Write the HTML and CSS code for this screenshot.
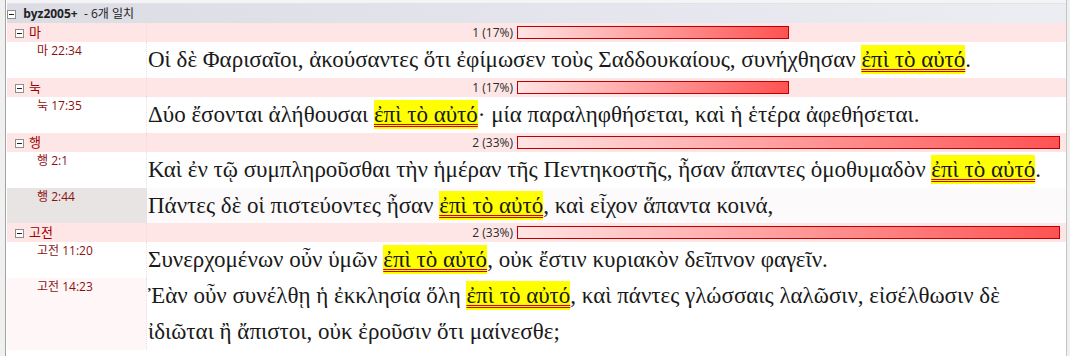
FILE: index.html
```html
<!DOCTYPE html>
<html lang="ko">
<head>
  <meta charset="UTF-8" />
  <title>byz2005+ 검색 결과</title>
  <link rel="stylesheet" href="styles.css">
</head>
<body>
  <div class="frame">
    <div class="topline"></div>
    <div class="results">
      <div class="source-row">
        <span class="tog"></span>
        <b>byz2005+</b>&nbsp; - 6개 일치
      </div>

      <div class="group-row">
        <div class="group-name"><span class="tog"></span>마</div>
        <div class="group-stat">
          <span class="count">1 (17%)</span>
          <div class="bar-track"><div class="bar" style="width: 50%"></div></div>
        </div>
      </div>
      <div class="verse-row">
        <div class="ref">마 22:34</div>
        <div class="text">Οἱ δὲ Φαρισαῖοι, ἀκούσαντες ὅτι ἐφίμωσεν τοὺς Σαδδουκαίους, συνήχθησαν <span class="hit">ἐπὶ τὸ αὐτό</span>.</div>
      </div>

      <div class="group-row">
        <div class="group-name"><span class="tog"></span>눅</div>
        <div class="group-stat">
          <span class="count">1 (17%)</span>
          <div class="bar-track"><div class="bar" style="width: 50%"></div></div>
        </div>
      </div>
      <div class="verse-row">
        <div class="ref">눅 17:35</div>
        <div class="text">Δύο ἔσονται ἀλήθουσαι <span class="hit">ἐπὶ τὸ αὐτό</span>· μία παραληφθήσεται, καὶ ἡ ἑτέρα ἀφεθήσεται.</div>
      </div>

      <div class="group-row">
        <div class="group-name"><span class="tog"></span>행</div>
        <div class="group-stat">
          <span class="count">2 (33%)</span>
          <div class="bar-track"><div class="bar" style="width: 100%"></div></div>
        </div>
      </div>
      <div class="verse-row">
        <div class="ref">행 2:1</div>
        <div class="text">Καὶ ἐν τῷ συμπληροῦσθαι τὴν ἡμέραν τῆς Πεντηκοστῆς, ἦσαν ἅπαντες ὁμοθυμαδὸν <span class="hit">ἐπὶ τὸ αὐτό</span>.</div>
      </div>
      <div class="verse-row selected">
        <div class="ref">행 2:44</div>
        <div class="text">Πάντες δὲ οἱ πιστεύοντες ἦσαν <span class="hit">ἐπὶ τὸ αὐτό</span>, καὶ εἶχον ἅπαντα κοινά,</div>
      </div>

      <div class="group-row">
        <div class="group-name"><span class="tog"></span>고전</div>
        <div class="group-stat">
          <span class="count">2 (33%)</span>
          <div class="bar-track"><div class="bar" style="width: 100%"></div></div>
        </div>
      </div>
      <div class="verse-row">
        <div class="ref">고전 11:20</div>
        <div class="text">Συνερχομένων οὖν ὑμῶν <span class="hit">ἐπὶ τὸ αὐτό</span>, οὐκ ἔστιν κυριακὸν δεῖπνον φαγεῖν.</div>
      </div>
      <div class="verse-row tinted">
        <div class="ref">고전 14:23</div>
        <div class="text">Ἐὰν οὖν συνέλθῃ ἡ ἐκκλησία ὅλη <span class="hit">ἐπὶ τὸ αὐτό</span>, καὶ πάντες γλώσσαις λαλῶσιν, εἰσέλθωσιν δὲ ἰδιῶται ἢ ἄπιστοι, οὐκ ἐροῦσιν ὅτι μαίνεσθε;</div>
      </div>
    </div>
  </div>
</body>
</html>
```

FILE: styles.css
```css
html, body {
  height: 100%;
  margin: 0;
}
body {
  background: #f0f0f0;
  font-family: "Open Sans", "Noto Sans CJK KR", sans-serif;
  font-size: 12px;
  color: #1e1e1e;
  overflow: hidden;
}
.frame {
  height: 100%;
  margin-left: 5px;
  margin-right: 3px;
  border-left: 1px solid #a3a3a3;
  border-right: 1px solid #c4c4c4;
  padding-left: 1px;
  background: #fff;
  box-sizing: border-box;
}
.topline {
  height: 3px;
  background: #f4f4f7;
  border-bottom: 1px solid #e2e2e8;
}
.tog {
  display: inline-block;
  position: relative;
  width: 7px;
  height: 7px;
  border: 1px solid #8f8f8f;
  background: #fff;
  margin-right: 5px;
  vertical-align: -1px;
}
.tog::after {
  content: "";
  position: absolute;
  left: 1px;
  right: 1px;
  top: 3px;
  height: 1px;
  background: #222;
}
.source-row {
  height: 19px;
  line-height: 19px;
  background: linear-gradient(to right, #dcdce5, #ececf3);
  color: #222;
  white-space: nowrap;
}
.source-row .tog {
  margin-right: 4px;
}
.group-row {
  display: grid;
  grid-template-columns: 140px 1fr;
  height: 19px;
  background: #ffe6e6;
}
.group-name {
  padding-left: 8px;
  line-height: 19px;
  color: #a00000;
  font-size: 13px;
  border-right: 1px dotted #f3d6d6;
}
.group-stat {
  display: grid;
  grid-template-columns: 366px 1fr;
  column-gap: 4px;
  align-items: center;
  padding-right: 6px;
}
.count {
  text-align: right;
  color: #2a2a2a;
  line-height: 19px;
}
.bar-track {
  height: 13px;
}
.bar {
  height: 100%;
  box-sizing: border-box;
  border: 1px solid #c00000;
  background: linear-gradient(to right, #ffe4e4, #ff5252);
}
.verse-row {
  display: grid;
  grid-template-columns: 140px 1fr;
}
.ref {
  padding-left: 30px;
  padding-top: 1px;
  line-height: 16px;
  color: #8b1010;
  border-right: 1px dotted #e4e4e4;
}
.text {
  padding-left: 1px;
  padding-right: 20px;
  font-family: "Liberation Serif", "DejaVu Serif", serif;
  font-size: 23px;
  line-height: 36px;
  color: #1a1a1a;
}
.hit {
  background: #ffff00;
  padding: 2px 0;
  text-decoration: underline double #d40000;
  text-decoration-thickness: 1px;
  text-underline-offset: 2px;
}
.selected .ref {
  background: #e9e4e4;
}
.selected .text {
  background: #fcfafa;
  line-height: 35px;
}
.tinted .ref {
  background: #fff7f7;
}
```
